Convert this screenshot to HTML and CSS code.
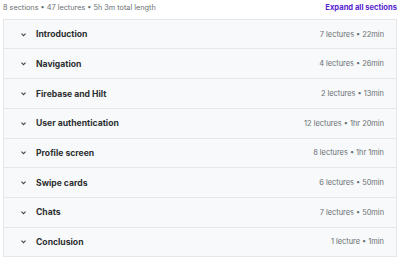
FILE: index.html
```html
<!DOCTYPE html>
<html lang="en">
<head>
    <meta charset="UTF-8">
    <title>Course content</title>
    <link rel="stylesheet" href="styles.css">
</head>
<body>
    <div class="curriculum">
        <div class="summary">
            <span class="totals">8 sections • 47 lectures • 5h 3m total length</span>
            <button class="expand-btn">Expand all sections</button>
        </div>

        <div class="sections">
            <div class="section">
                <span class="chevron"><svg width="7" height="7" viewBox="0 0 24 24" fill="none" stroke="currentColor" stroke-width="3.5"><path d="M5 9l7 7 7-7"></path></svg></span>
                <span class="title">Introduction</span>
                <span class="meta">7 lectures • 22min</span>
            </div>
            <div class="section">
                <span class="chevron"><svg width="7" height="7" viewBox="0 0 24 24" fill="none" stroke="currentColor" stroke-width="3.5"><path d="M5 9l7 7 7-7"></path></svg></span>
                <span class="title">Navigation</span>
                <span class="meta">4 lectures • 26min</span>
            </div>
            <div class="section">
                <span class="chevron"><svg width="7" height="7" viewBox="0 0 24 24" fill="none" stroke="currentColor" stroke-width="3.5"><path d="M5 9l7 7 7-7"></path></svg></span>
                <span class="title">Firebase and Hilt</span>
                <span class="meta">2 lectures • 13min</span>
            </div>
            <div class="section">
                <span class="chevron"><svg width="7" height="7" viewBox="0 0 24 24" fill="none" stroke="currentColor" stroke-width="3.5"><path d="M5 9l7 7 7-7"></path></svg></span>
                <span class="title">User authentication</span>
                <span class="meta">12 lectures • 1hr 20min</span>
            </div>
            <div class="section">
                <span class="chevron"><svg width="7" height="7" viewBox="0 0 24 24" fill="none" stroke="currentColor" stroke-width="3.5"><path d="M5 9l7 7 7-7"></path></svg></span>
                <span class="title">Profile screen</span>
                <span class="meta">8 lectures • 1hr 1min</span>
            </div>
            <div class="section">
                <span class="chevron"><svg width="7" height="7" viewBox="0 0 24 24" fill="none" stroke="currentColor" stroke-width="3.5"><path d="M5 9l7 7 7-7"></path></svg></span>
                <span class="title">Swipe cards</span>
                <span class="meta">6 lectures • 50min</span>
            </div>
            <div class="section">
                <span class="chevron"><svg width="7" height="7" viewBox="0 0 24 24" fill="none" stroke="currentColor" stroke-width="3.5"><path d="M5 9l7 7 7-7"></path></svg></span>
                <span class="title">Chats</span>
                <span class="meta">7 lectures • 50min</span>
            </div>
            <div class="section">
                <span class="chevron"><svg width="7" height="7" viewBox="0 0 24 24" fill="none" stroke="currentColor" stroke-width="3.5"><path d="M5 9l7 7 7-7"></path></svg></span>
                <span class="title">Conclusion</span>
                <span class="meta">1 lecture • 1min</span>
            </div>
        </div>
    </div>
</body>
</html>
```

FILE: styles.css
```css
* {
    margin: 0;
    padding: 0;
    box-sizing: border-box;
}

body {
    background: #ffffff;
    font-family: Inter, "Noto Sans", sans-serif;
    color: #2d2f31;
    overflow: hidden;
}

.curriculum {
    padding: 0 3px;
}

.summary {
    display: flex;
    align-items: center;
    justify-content: space-between;
    height: 18.8px;
    padding-bottom: 4px;
}

.totals {
    font-size: 7.3px;
    color: #6a6f73;
}

.expand-btn {
    background: none;
    border: none;
    font-family: inherit;
    font-size: 7.6px;
    font-weight: 700;
    color: #5624d0;
    cursor: pointer;
}

.sections {
    border: 1px solid #e4e8eb;
    border-bottom: none;
}

.section {
    display: flex;
    align-items: center;
    height: 29.7px;
    padding: 0 12px 0 16px;
    background: #f7f9fa;
    border-bottom: 1px solid #e4e8eb;
}

.chevron {
    display: flex;
    color: #3e4143;
    margin-right: 9px;
}

.title {
    flex: 1;
    font-size: 8.6px;
    font-weight: 700;
}

.meta {
    font-size: 7.4px;
    color: #6a6f73;
}
```
